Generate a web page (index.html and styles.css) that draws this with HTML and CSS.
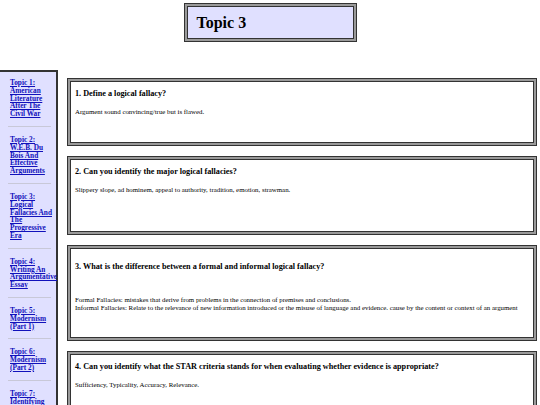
FILE: index.html
```html
<!DOCTYPE html>
<html>
<head>
<meta charset="utf-8">
<title>Topic 3</title>
<link rel="stylesheet" href="styles.css">
</head>
<body>
<header class="title-box"><h1 class="title">Topic 3</h1></header>
<div class="layout">
  <nav class="sidebar">
    <div class="nav-item"><a href="#">Topic 1: American Literature After The Civil War</a></div>
    <hr class="sep">
    <div class="nav-item"><a href="#">Topic 2: W.E.B. Du Bois And Effective Arguments</a></div>
    <hr class="sep">
    <div class="nav-item"><a href="#">Topic 3: Logical Fallacies And The Progressive Era</a></div>
    <hr class="sep">
    <div class="nav-item"><a href="#">Topic 4: Writing An Argumentative Essay</a></div>
    <hr class="sep">
    <div class="nav-item"><a href="#">Topic 5: Modernism (Part 1)</a></div>
    <hr class="sep">
    <div class="nav-item"><a href="#">Topic 6: Modernism (Part 2)</a></div>
    <hr class="sep">
    <div class="nav-item"><a href="#">Topic 7: Identifying Bias</a></div>
  </nav>
  <main class="content">
    <section class="card card-1">
      <h3 class="q">1. Define a logical fallacy?</h3>
      <p class="a">Argument sound convincing/true but is flawed.</p>
    </section>
    <section class="card card-2">
      <h3 class="q">2. Can you identify the major logical fallacies?</h3>
      <p class="a">Slippery slope, ad hominem, appeal to authority, tradition, emotion, strawman.</p>
    </section>
    <section class="card card-3">
      <h3 class="q">3. What is the difference between a formal and informal logical fallacy?</h3>
      <p class="a">Formal Fallacies: mistakes that derive from problems in the connection of premises and conclusions.<br>Informal Fallacies: Relate to the relevance of new information introduced or the misuse of language and evidence. cause by the content or context of an argument</p>
    </section>
    <section class="card card-4">
      <h3 class="q">4. Can you identify what the STAR criteria stands for when evaluating whether evidence is appropriate?</h3>
      <p class="a">Sufficiency, Typicality, Accuracy, Relevance.</p>
    </section>
  </main>
</div>
</body>
</html>
```

FILE: styles.css
```css
html, body {
  margin: 0;
  padding: 0;
  background: #ffffff;
  font-family: "Liberation Serif", "Times New Roman", serif;
  color: #000;
}

.title-box {
  box-sizing: border-box;
  width: 173px;
  height: 39px;
  margin: 3px auto 0;
  background: #e0e0ff;
  border: 1px solid #333;
  box-shadow: inset 0 0 0 2px #9a9a9a, inset 0 0 0 3px #333;
  display: flex;
  align-items: center;
  padding-left: 12px;
}

.title {
  margin: 0;
  font-size: 16px;
  font-weight: bold;
  line-height: 1;
}

.layout {
  display: flex;
  align-items: flex-start;
  gap: 9px;
  margin-top: 28px;
}

.sidebar {
  box-sizing: border-box;
  flex: 0 0 58px;
  width: 58px;
  min-height: 340px;
  background: #e0e0ff;
  border-top: 2px solid #333;
  border-right: 2px solid #333;
  padding: 7px 1px 0 10px;
}

.nav-item {
  font-size: 7.3px;
  line-height: 7.8px;
  font-weight: bold;
}

.nav-item a {
  color: #1111bb;
  text-decoration: underline;
}

.sep {
  border: 0;
  border-top: 1px solid #c8c8d8;
  margin: 8px 4px 9px -2px;
  height: 0;
}

.content {
  flex: 1;
  margin-right: 3px;
  margin-top: 8px;
  display: flex;
  flex-direction: column;
  gap: 10px;
}

.card {
  box-sizing: border-box;
  background: #fff;
  border: 1px solid #333;
  box-shadow: inset 0 0 0 2px #9a9a9a, inset 0 0 0 3px #333;
  padding: 10px 8px 0 7px;
}

.card-1 { height: 68px; }
.card-2 { height: 79px; }
.card-3 { height: 96px; padding-top: 16px; }
.card-4 { height: 80px; }

.q {
  margin: 0;
  font-size: 8.2px;
  line-height: 10px;
  font-weight: bold;
}

.a {
  margin: 9px 0 0;
  font-size: 6.85px;
  line-height: 8px;
}

.card-3 .a {
  margin-top: 24px;
}
```
